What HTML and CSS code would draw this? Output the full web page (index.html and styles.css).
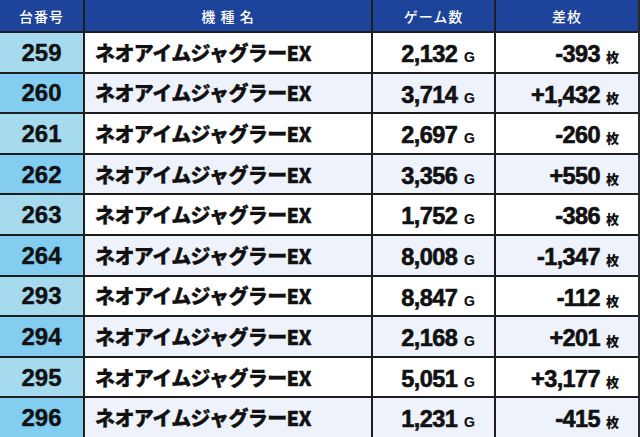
FILE: index.html
```html
<!DOCTYPE html>
<html lang="ja">
<head>
<meta charset="utf-8">
<link rel="stylesheet" href="styles.css">
</head>
<body>
<div class="table">
  <div class="h">台番号</div><div class="h">機 種 名</div><div class="h">ゲーム数</div><div class="h">差枚</div>

  <div class="no">259</div><div class="name">ネオアイムジャグラーEX</div><div class="num">2,132<span class="g">G</span></div><div class="num">-393<span class="u">枚</span></div>
  <div class="no alt">260</div><div class="name alt">ネオアイムジャグラーEX</div><div class="num alt">3,714<span class="g">G</span></div><div class="num alt">+1,432<span class="u">枚</span></div>
  <div class="no">261</div><div class="name">ネオアイムジャグラーEX</div><div class="num">2,697<span class="g">G</span></div><div class="num">-260<span class="u">枚</span></div>
  <div class="no alt">262</div><div class="name alt">ネオアイムジャグラーEX</div><div class="num alt">3,356<span class="g">G</span></div><div class="num alt">+550<span class="u">枚</span></div>
  <div class="no">263</div><div class="name">ネオアイムジャグラーEX</div><div class="num">1,752<span class="g">G</span></div><div class="num">-386<span class="u">枚</span></div>
  <div class="no alt">264</div><div class="name alt">ネオアイムジャグラーEX</div><div class="num alt">8,008<span class="g">G</span></div><div class="num alt">-1,347<span class="u">枚</span></div>
  <div class="no">293</div><div class="name">ネオアイムジャグラーEX</div><div class="num">8,847<span class="g">G</span></div><div class="num">-112<span class="u">枚</span></div>
  <div class="no alt">294</div><div class="name alt">ネオアイムジャグラーEX</div><div class="num alt">2,168<span class="g">G</span></div><div class="num alt">+201<span class="u">枚</span></div>
  <div class="no">295</div><div class="name">ネオアイムジャグラーEX</div><div class="num">5,051<span class="g">G</span></div><div class="num">+3,177<span class="u">枚</span></div>
  <div class="no alt">296</div><div class="name alt">ネオアイムジャグラーEX</div><div class="num alt">1,231<span class="g">G</span></div><div class="num alt">-415<span class="u">枚</span></div>
</div>
</body>
</html>
```
FILE: styles.css
```css
html, body {
  margin: 0;
  padding: 0;
  background: #ffffff;
}
.table {
  width: 638px;
  height: 437px;
  border-right: 2px solid #2a2a2a;
  background: #1e1e1e;
  display: grid;
  grid-template-columns: 83px 286px 121px 142px;
  grid-template-rows: 31px repeat(10, 1fr);
  column-gap: 2px;
  row-gap: 2px;
  font-family: "Liberation Sans", "Noto Sans CJK JP", sans-serif;
  color: #111;
}
.h {
  background: #1d449a;
  color: #ffffff;
  font-family: "Noto Sans CJK JP", sans-serif;
  font-weight: 500;
  font-size: 14px;
  letter-spacing: 1px;
  display: flex;
  align-items: center;
  justify-content: center;
}
.no {
  background: #a6daee;
  font-weight: 700;
  font-size: 24px;
  -webkit-text-stroke: 0.4px #111;
  display: flex;
  align-items: center;
  justify-content: center;
  padding-top: 1px;
}
.name {
  background: #ffffff;
  font-family: "Noto Sans CJK JP", sans-serif;
  font-weight: 900;
  font-size: 20px;
  letter-spacing: -0.6px;
  -webkit-text-stroke: 0.3px #111;
  display: flex;
  align-items: center;
  padding-left: 10px;
}
.num {
  background: #ffffff;
  font-weight: 700;
  font-size: 23.5px;
  letter-spacing: -0.6px;
  -webkit-text-stroke: 0.6px #111;
  display: flex;
  align-items: baseline;
  justify-content: flex-end;
  padding-right: 19px;
  padding-top: 8px;
}
.alt {
  background: #eef2fa;
}
.no.alt { background: #82cdf0; }
.g {
  font-size: 14px;
  margin-left: 7px;
  letter-spacing: 0;
  -webkit-text-stroke: 0.2px #111;
}
.u {
  font-family: "Noto Sans CJK JP", sans-serif;
  font-size: 13px;
  font-weight: 900;
  margin-left: 6px;
  letter-spacing: 0;
  -webkit-text-stroke: 0;
}
```
